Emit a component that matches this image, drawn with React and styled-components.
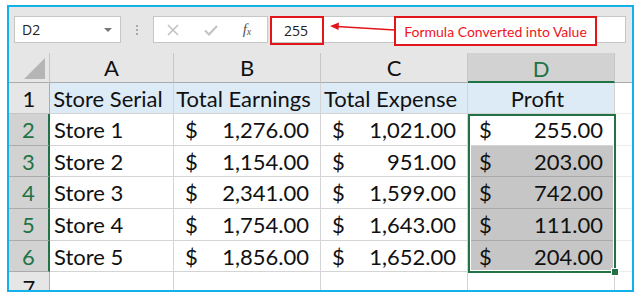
import styled, { createGlobalStyle } from "styled-components";

const GREEN = "#217346";
const GRID = "#d4d4d4";

const Global = createGlobalStyle`
  body {
    margin: 0;
    background: #fff;
  }
`;

const Frame = styled.div`
  position: relative;
  box-sizing: border-box;
  margin: 5px 0 0 7px;
  width: 627px;
  height: 287px;
  border: 2px solid #13b0ea;
  background: #fff;
  overflow: hidden;
  display: flex;
  flex-direction: column;
`;

const Toolbar = styled.div`
  flex: none;
  height: 46px;
  box-sizing: border-box;
  padding: 9px 6px 0 5px;
  background: #e6e6e6;
  display: flex;
  align-items: flex-start;
  font-family: "Open Sans", "Liberation Sans", sans-serif;
`;

const NameBox = styled.div`
  box-sizing: border-box;
  width: 107px;
  height: 27px;
  background: #fff;
  border: 1px solid #c6c6c6;
  display: flex;
  align-items: center;
  justify-content: space-between;
  padding: 0 8px 0 7px;
  font-size: 14px;
  color: #222;
`;

const Caret = styled.span`
  width: 0;
  height: 0;
  border-left: 4px solid transparent;
  border-right: 4px solid transparent;
  border-top: 4px solid #777;
`;

const Dots = styled.div`
  width: 32px;
  height: 27px;
  display: flex;
  flex-direction: column;
  align-items: center;
  justify-content: center;
  gap: 2px;
  span {
    width: 2px;
    height: 2px;
    background: #aaa;
  }
`;

const FxGroup = styled.div`
  box-sizing: border-box;
  width: 115px;
  height: 27px;
  background: #fff;
  border: 1px solid #c6c6c6;
  display: flex;
  align-items: center;
  justify-content: space-around;
  padding: 0 4px 0 0;
  margin-right: 2px;
`;

const FxLabel = styled.span`
  font-family: "Liberation Serif", serif;
  font-style: italic;
  font-size: 15px;
  color: #555;
  sub {
    font-size: 10px;
    vertical-align: -1px;
  }
`;

const FormulaBar = styled.div`
  flex: 1;
  height: 27px;
  box-sizing: border-box;
  background: #fff;
  border-top: 1px solid #c6c6c6;
  border-bottom: 1px solid #c6c6c6;
  border-right: 1px solid #c6c6c6;
  display: flex;
`;

const ValueBox = styled.div`
  box-sizing: border-box;
  width: 54px;
  height: 29px;
  margin-top: -1px;
  border: 2px solid #e4141b;
  display: flex;
  align-items: center;
  padding-left: 12px;
  font-size: 14px;
  color: #222;
`;

const Callout = styled.div`
  position: absolute;
  left: 385px;
  top: 9px;
  width: 203px;
  height: 30px;
  box-sizing: border-box;
  border: 2px solid #e4141b;
  background: #fff;
  color: #f0141b;
  font-family: "Lato", "Liberation Sans", sans-serif;
  font-size: 14px;
  display: flex;
  align-items: center;
  justify-content: center;
`;

const Arrow = styled.svg`
  position: absolute;
  left: 318px;
  top: 14px;
`;

const Sheet = styled.div`
  position: relative;
  flex: 1;
  display: grid;
  grid-template-columns: 41px 124px 147px 147px 147px 1fr;
  grid-template-rows: 30px 31px 32px 31px 32px 32px 31px 31px;
  font-family: "Lato", "Liberation Sans", sans-serif;
  font-size: 22px;
  color: #111;
`;

const Corner = styled.div`
  background: #e6e6e6;
  border-right: 1px solid #c6c6c6;
  border-bottom: 1px solid #ababab;
  display: flex;
  align-items: flex-end;
  justify-content: flex-end;
  padding: 0 4px 3px 0;
  box-sizing: border-box;
`;

const Triangle = styled.span`
  width: 0;
  height: 0;
  border-left: 21px solid transparent;
  border-bottom: 21px solid #b5b5b5;
`;

const ColHead = styled.div`
  box-sizing: border-box;
  background: ${(p) => (p.$active ? "#d2d2d2" : "#e6e6e6")};
  color: ${(p) => (p.$active ? GREEN : "#111")};
  border-right: 1px solid #c6c6c6;
  border-bottom: ${(p) => (p.$active ? `2px solid ${GREEN}` : "1px solid #ababab")};
  display: flex;
  align-items: center;
  justify-content: center;
  padding-top: ${(p) => (p.$active ? "2px" : "0")};
`;

const ColFill = styled.div`
  background: #e6e6e6;
  border-bottom: 1px solid #ababab;
`;

const RowHead = styled.div`
  box-sizing: border-box;
  background: ${(p) => (p.$active ? "#d2d2d2" : "#e6e6e6")};
  color: ${(p) => (p.$active ? GREEN : "#111")};
  border-bottom: 1px solid ${(p) => (p.$active ? "#ababab" : "#c6c6c6")};
  border-right: ${(p) => (p.$active ? `2px solid ${GREEN}` : "1px solid #ababab")};
  display: flex;
  align-items: center;
  justify-content: center;
`;

const Cell = styled.div`
  box-sizing: border-box;
  background: ${(p) => (p.$head ? "#ddebf7" : p.$shade ? "#c6c6c6" : "#fff")};
  border-right: 1px solid ${GRID};
  border-bottom: 1px solid ${(p) => (p.$shade ? "#a9a9a9" : GRID)};
  display: flex;
  align-items: center;
  justify-content: ${(p) => (p.$head ? "center" : "space-between")};
  padding: 0 11px 0 ${(p) => (p.$money ? "11px" : "4px")};
  white-space: nowrap;
  overflow: hidden;
`;

const Blank = styled.div`
  background: #fff;
  border-bottom: 1px solid #ececec;
`;

const Selection = styled.div`
  position: absolute;
  left: 459px;
  top: 61px;
  width: 148px;
  height: 159px;
  box-sizing: border-box;
  border: 2px solid ${GREEN};
  box-shadow: inset 0 0 0 1px #fff;
  pointer-events: none;
`;

const Handle = styled.div`
  position: absolute;
  right: -5px;
  bottom: -5px;
  width: 6px;
  height: 6px;
  background: ${GREEN};
  border: 1px solid #fff;
`;

const rows = [
  ["Store 1", "1,276.00", "1,021.00", "255.00"],
  ["Store 2", "1,154.00", "951.00", "203.00"],
  ["Store 3", "2,341.00", "1,599.00", "742.00"],
  ["Store 4", "1,754.00", "1,643.00", "111.00"],
  ["Store 5", "1,856.00", "1,652.00", "204.00"],
];

function Money({ value, shade }) {
  return (
    <Cell $money $shade={shade}>
      <span>$</span>
      <span>{value}</span>
    </Cell>
  );
}

export default function App() {
  return (
    <>
      <Global />
      <Frame>
        <Toolbar>
          <NameBox>
            D2
            <Caret />
          </NameBox>
          <Dots>
            <span />
            <span />
            <span />
          </Dots>
          <FxGroup>
            <svg width="14" height="14" viewBox="0 0 14 14">
              <path d="M2 2 L12 12 M12 2 L2 12" stroke="#c2c2c2" strokeWidth="1.6" />
            </svg>
            <svg width="16" height="14" viewBox="0 0 16 14">
              <path d="M2 7.5 L6 11.5 L14 3" stroke="#c2c2c2" strokeWidth="2" fill="none" />
            </svg>
            <FxLabel>
              f<sub>x</sub>
            </FxLabel>
          </FxGroup>
          <FormulaBar>
            <ValueBox>255</ValueBox>
          </FormulaBar>
        </Toolbar>
        <Arrow width="80" height="12" viewBox="0 0 80 12">
          <path d="M10 5.5 L76 9.5" stroke="#e4141b" strokeWidth="1.3" />
          <path d="M3 5 L12 1.5 L11.5 9 Z" fill="#e4141b" />
        </Arrow>
        <Callout>Formula Converted into Value</Callout>
        <Sheet>
          <Corner>
            <Triangle />
          </Corner>
          {["A", "B", "C", "D"].map((c) => (
            <ColHead key={c} $active={c === "D"}>
              {c}
            </ColHead>
          ))}
          <ColFill />

          <RowHead>1</RowHead>
          <Cell $head>Store Serial</Cell>
          <Cell $head>Total Earnings</Cell>
          <Cell $head>Total Expense</Cell>
          <Cell $head>Profit</Cell>
          <Blank />

          {rows.map((r, i) => (
            <div key={r[0]} style={{ display: "contents" }}>
              <RowHead $active>{i + 2}</RowHead>
              <Cell>{r[0]}</Cell>
              <Money value={r[1]} />
              <Money value={r[2]} />
              <Money value={r[3]} shade={i > 0} />
              <Blank />
            </div>
          ))}

          <RowHead>7</RowHead>
          <Cell />
          <Cell />
          <Cell />
          <Cell />
          <Blank />

          <Selection>
            <Handle />
          </Selection>
        </Sheet>
      </Frame>
    </>
  );
}
